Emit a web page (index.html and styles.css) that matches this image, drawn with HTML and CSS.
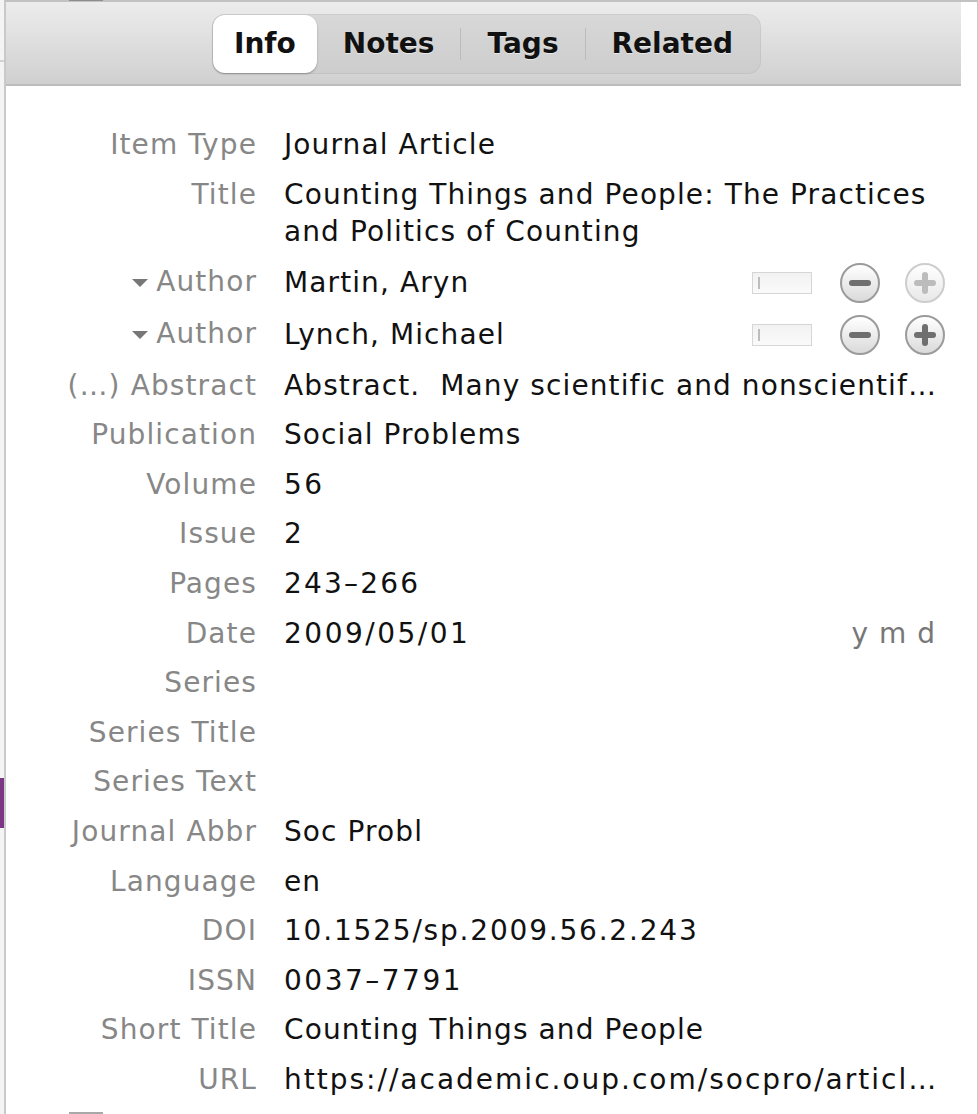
FILE: index.html
```html
<!DOCTYPE html>
<html>
<head>
<meta charset="utf-8">
<link rel="stylesheet" href="styles.css">
</head>
<body>
<div class="strip">
  <div class="strip-top"></div>
  <div class="strip-line"></div>
  <div class="strip-mid"></div>
  <div class="strip-mark"></div>
</div>
<div class="pane">
  <div class="top-dash"></div>
  <div class="header">
    <div class="tabs">
      <div class="tab active">Info</div>
      <div class="tab">Notes</div>
      <div class="sep"></div>
      <div class="tab">Tags</div>
      <div class="sep"></div>
      <div class="tab">Related</div>
    </div>
  </div>
  <div class="fields">
    <div class="row"><div class="label">Item Type</div><div class="value">Journal Article</div></div>
    <div class="row"><div class="label">Title</div><div class="value">Counting Things and People: The Practices and Politics of Counting</div></div>
    <div class="row"><div class="label"><span class="tri"></span>Author</div><div class="value split"><span>Martin, Aryn</span>
      <span class="controls"><span class="field"><span class="caret"></span></span><span class="btn"><span class="bar"></span></span><span class="btn off"><span class="bar"></span><span class="bar v"></span></span></span></div></div>
    <div class="row"><div class="label"><span class="tri"></span>Author</div><div class="value split"><span>Lynch, Michael</span>
      <span class="controls"><span class="field"><span class="caret"></span></span><span class="btn"><span class="bar"></span></span><span class="btn"><span class="bar"></span><span class="bar v"></span></span></span></div></div>
    <div class="row"><div class="label">(…) Abstract</div><div class="value nowrap">Abstract.  Many scientific and nonscientif…</div></div>
    <div class="row"><div class="label">Publication</div><div class="value">Social Problems</div></div>
    <div class="row"><div class="label">Volume</div><div class="value num">56</div></div>
    <div class="row"><div class="label">Issue</div><div class="value num">2</div></div>
    <div class="row"><div class="label">Pages</div><div class="value pages">243–266</div></div>
    <div class="row"><div class="label">Date</div><div class="value split"><span class="num">2009/05/01</span><span class="ymd">y m d</span></div></div>
    <div class="row"><div class="label">Series</div><div class="value"></div></div>
    <div class="row"><div class="label">Series Title</div><div class="value"></div></div>
    <div class="row"><div class="label">Series Text</div><div class="value"></div></div>
    <div class="row"><div class="label">Journal Abbr</div><div class="value">Soc Probl</div></div>
    <div class="row"><div class="label">Language</div><div class="value">en</div></div>
    <div class="row"><div class="label">DOI</div><div class="value doi">10.1525/sp.2009.56.2.243</div></div>
    <div class="row"><div class="label">ISSN</div><div class="value num">0037–7791</div></div>
    <div class="row"><div class="label">Short Title</div><div class="value">Counting Things and People</div></div>
    <div class="row"><div class="label">URL</div><div class="value nowrap url">https://academic.oup.com/socpro/articl…</div></div>
  </div>
  <div class="bottom-dash"></div>
</div>
</body>
</html>
```
FILE: styles.css
```css
html, body {
  margin: 0;
  padding: 0;
}
body {
  width: 978px;
  height: 1114px;
  overflow: hidden;
  display: flex;
  background: #fff;
  font-family: "DejaVu Sans", sans-serif;
}
.strip {
  width: 4px;
  background: #f4f4f4;
  display: flex;
  flex-direction: column;
}
.strip-top { height: 60px; }
.strip-line { height: 2px; background: #d2d2d2; }
.strip-mid { height: 716px; }
.strip-mark { height: 50px; background: #7d3586; }
.pane {
  flex: 1;
  position: relative;
  border-left: 2px solid #c9c9c9;
  border-right: 1px solid #c9c9c9;
  border-top: 2px solid #c2c2c2;
  display: flex;
  flex-direction: column;
}
.top-dash {
  position: absolute;
  left: 63px;
  top: -2px;
  width: 34px;
  height: 1px;
  background: #8e8e8e;
}
.bottom-dash {
  position: absolute;
  left: 63px;
  bottom: 0;
  width: 34px;
  height: 2px;
  background: #a8a8a8;
}
.header {
  height: 82px;
  margin-right: 16px;
  background: linear-gradient(#ececec, #d0d0d0);
  border-bottom: 2px solid #bcbcbc;
  display: flex;
  justify-content: center;
  align-items: center;
}
.tabs {
  display: flex;
  align-items: center;
  height: 60px;
  margin-top: 2px;
  margin-left: 6px;
  padding: 0 2px 0 1px;
  background: linear-gradient(#d8d8d8, #cdcdcd);
  border-radius: 13px;
  box-shadow: inset 0 0 0 1px rgba(0,0,0,0.05);
}
.tab {
  font-family: "DejaVu Sans", sans-serif;
  font-weight: bold;
  font-size: 28px;
  color: #111;
  padding: 0 26px;
  height: 58px;
  line-height: 58px;
  letter-spacing: 0;
  text-shadow: 0 1px 0 rgba(255,255,255,0.5);
}
.tab.active {
  background: #fff;
  border-radius: 12px;
  padding: 0 21px;
  box-shadow: 0 1px 2px rgba(0,0,0,0.3);
}
.sep {
  width: 1px;
  height: 32px;
  background: #bcbcbc;
}
.fields {
  padding-top: 34px;
  padding-right: 32px;
  display: flex;
  flex-direction: column;
}
.row {
  display: flex;
  padding: 6px 0 5.8px 0;
  min-height: 37.8px;
  font-size: 28px;
  letter-spacing: 1.1px;
  line-height: 37.8px;
}
.label {
  width: 251px;
  flex: none;
  text-align: right;
  color: #878787;
  display: flex;
  justify-content: flex-end;
  align-items: center;
  height: 37.8px;
  white-space: nowrap;
}
.value {
  flex: 1;
  margin-left: 27px;
  color: #111;
}
.num { letter-spacing: 2.5px; }
.pages { letter-spacing: 2.2px; }
.doi { letter-spacing: 1.8px; }
.url { letter-spacing: 2px; }
.nowrap { white-space: pre; overflow: hidden; }
.split {
  display: flex;
  justify-content: space-between;
  align-items: center;
}
.tri {
  width: 0;
  height: 0;
  border-left: 8px solid transparent;
  border-right: 8px solid transparent;
  border-top: 8px solid #777;
  margin-right: 8px;
  margin-top: 2px;
}
.controls {
  display: flex;
  align-items: center;
}
.field {
  width: 58px;
  height: 20px;
  border: 1px solid #d6d6d6;
  background: linear-gradient(#f2f2f2, #fafafa);
  margin-right: 28px;
  display: flex;
  align-items: center;
}
.caret {
  width: 2px;
  height: 12px;
  background: #bdbdbd;
  margin-left: 5px;
}
.btn {
  width: 36px;
  height: 36px;
  border: 2px solid #9b9b9b;
  border-radius: 50%;
  background: linear-gradient(#ffffff, #dadada);
  position: relative;
  margin-left: 25px;
  display: flex;
  align-items: center;
  justify-content: center;
}
.field + .btn { margin-left: 0; }
.bar {
  position: absolute;
  width: 22px;
  height: 6px;
  border-radius: 3px;
  background: #6f6f6f;
}
.bar.v {
  width: 6px;
  height: 22px;
}
.btn.off { border-color: #cdcdcd; background: linear-gradient(#ffffff, #e8e8e8); }
.btn.off .bar { background: #bcbcbc; }
.ymd {
  color: #777;
  letter-spacing: 0;
  word-spacing: 2px;
  margin-right: 10px;
}
```
